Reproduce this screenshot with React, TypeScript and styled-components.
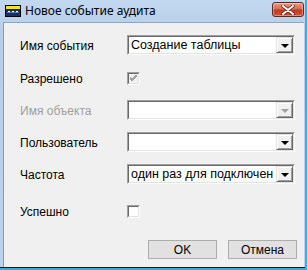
import React from "react";
import styled, { createGlobalStyle, css } from "styled-components";

const GlobalStyle = createGlobalStyle`
  html, body {
    margin: 0;
    padding: 0;
    background: #ffffff;
  }
  * {
    box-sizing: border-box;
  }
`;

const Window = styled.div`
  width: 307px;
  height: 270px;
  display: flex;
  flex-direction: column;
  background: linear-gradient(#c2d8ef, #b7cfe9 30px, #bad2ec);
  border-right: 2px solid #33b3e2;
  border-bottom: 2px solid #2fb0e0;
  box-shadow: inset 0 -1px 0 #1a1a1a;
  overflow: hidden;
`;

const TitleBar = styled.div`
  height: 22px;
  flex: none;
  display: flex;
  align-items: center;
  padding-left: 5px;
  gap: 4px;
  font-family: "Noto Sans", "Open Sans", sans-serif;
  font-size: 12px;
  color: #000;
`;

const TitleText = styled.span`
  flex: 1;
  white-space: nowrap;
  line-height: 14px;
  margin-top: -1px;
`;

const CloseButton = styled.div`
  width: 32px;
  height: 15px;
  margin-right: 1px;
  margin-top: -3px;
  border: 1px solid #6b2418;
  border-radius: 3px;
  background: linear-gradient(#e9a08e, #d46a52 45%, #c13a22 55%, #c8553b);
  display: flex;
  align-items: center;
  justify-content: center;
  box-shadow: inset 0 0 0 1px rgba(255, 255, 255, 0.35);
`;

const Client = styled.div`
  flex: 1;
  margin: 0 1px 1px 3px;
  background: #f0f0f0;
  border-left: 1px solid #7e9cc0;
  border-top: 1px solid #8aa6c6;
  padding: 12px 7px 0 16px;
  font-family: "Liberation Sans", Arial, sans-serif;
  font-size: 12px;
  color: #000;
  display: flex;
  flex-direction: column;
`;

const Row = styled.div<{ $top: number; $h: number }>`
  display: grid;
  grid-template-columns: 107px 168px;
  align-items: center;
  margin-top: ${(p) => p.$top}px;
  height: ${(p) => p.$h}px;
`;

const Label = styled.span<{ $disabled?: boolean }>`
  color: ${(p) => (p.$disabled ? "#a0a0a0" : "#000")};
  white-space: nowrap;
  padding-top: 2px;
`;

const sunken = css`
  border-style: solid;
  border-width: 1px;
  border-color: #a0a0a0 #ffffff #ffffff #a0a0a0;
`;

const Combo = styled.div`
  ${sunken};
  height: 20px;
  width: 168px;
`;

const ComboInner = styled.div`
  height: 100%;
  border-style: solid;
  border-width: 1px;
  border-color: #696969 #e3e3e3 #e3e3e3 #696969;
  background: #fff;
  display: flex;
  align-items: stretch;
`;

const ComboText = styled.span`
  flex: 1;
  overflow: hidden;
  white-space: nowrap;
  font-size: 12.5px;
  line-height: 16px;
  padding-left: 2px;
`;

const DropButton = styled.div<{ $disabled?: boolean }>`
  width: 17px;
  flex: none;
  background: #f0f0f0;
  border-style: solid;
  border-width: 1px;
  border-color: #e3e3e3 #696969 #696969 #e3e3e3;
  box-shadow: inset 1px 1px 0 #fff, inset -1px -1px 0 #a0a0a0;
  display: flex;
  align-items: center;
  justify-content: center;
  &::after {
    content: "";
    border-left: 4px solid transparent;
    border-right: 4px solid transparent;
    border-top: 4px solid ${(p) => (p.$disabled ? "#a0a0a0" : "#000")};
    margin-top: 1px;
  }
`;

const CheckBox = styled.div<{ $disabled?: boolean }>`
  ${sunken};
  width: 13px;
  height: 13px;
  div {
    width: 100%;
    height: 100%;
    border-style: solid;
    border-width: 1px;
    border-color: #696969 #e3e3e3 #e3e3e3 #696969;
    background: ${(p) => (p.$disabled ? "#f0f0f0" : "#fff")};
    display: flex;
    align-items: center;
    justify-content: center;
  }
`;

const Buttons = styled.div`
  display: flex;
  justify-content: flex-end;
  gap: 11px;
  margin-top: 24px;
`;

const Button = styled.div`
  width: 69px;
  height: 19px;
  border: 1px solid #adadad;
  background: #e1e1e1;
  display: flex;
  align-items: center;
  justify-content: center;
`;

const Combobox = ({ value, disabled }: { value?: string; disabled?: boolean }) => (
  <Combo>
    <ComboInner>
      <ComboText>{value}</ComboText>
      <DropButton $disabled={disabled} />
    </ComboInner>
  </Combo>
);

const Check = ({ checked, disabled }: { checked?: boolean; disabled?: boolean }) => (
  <CheckBox $disabled={disabled}>
    <div>
      {checked && (
        <svg width="7" height="7" viewBox="0 0 7 7">
          <path d="M0 2 L2 4 L7 -1 M0 3 L2 5 L7 0 M0 4 L2 6 L7 1" stroke="#a0a0a0" strokeWidth="1" fill="none" />
        </svg>
      )}
    </div>
  </CheckBox>
);

const AppIcon = () => (
  <svg width="16" height="12" viewBox="0 0 16 12">
    <rect x="0.5" y="0.5" width="15" height="11" fill="#1c2f5a" stroke="#000" />
    <rect x="1" y="1" width="14" height="3" fill="#f6e600" />
    <rect x="3" y="6" width="2" height="1" fill="#fff" />
    <rect x="7" y="6" width="2" height="1" fill="#fff" />
    <rect x="11" y="6" width="2" height="1" fill="#fff" />
    <rect x="2" y="7" width="12" height="1" fill="#5a7cc0" />
  </svg>
);

export default function App() {
  return (
    <>
      <GlobalStyle />
      <Window>
        <TitleBar>
          <AppIcon />
          <TitleText>Новое событие аудита</TitleText>
          <CloseButton>
            <svg width="14" height="10" viewBox="0 0 14 10">
              <path d="M2 1 L12 9 M12 1 L2 9" stroke="#5a1a10" strokeWidth="3.4" strokeLinecap="round" />
              <path d="M2 1 L12 9 M12 1 L2 9" stroke="#fff" strokeWidth="2" strokeLinecap="round" />
            </svg>
          </CloseButton>
        </TitleBar>
        <Client>
          <Row $top={0} $h={20}>
            <Label>Имя события</Label>
            <Combobox value="Создание таблицы" />
          </Row>
          <Row $top={15} $h={13}>
            <Label>Разрешено</Label>
            <Check checked disabled />
          </Row>
          <Row $top={17} $h={20}>
            <Label $disabled>Имя объекта</Label>
            <Combobox disabled />
          </Row>
          <Row $top={12} $h={20}>
            <Label>Пользователь</Label>
            <Combobox />
          </Row>
          <Row $top={12} $h={20}>
            <Label>Частота</Label>
            <Combobox value="один раз для подключен" />
          </Row>
          <Row $top={19} $h={13}>
            <Label>Успешно</Label>
            <Check />
          </Row>
          <Buttons>
            <Button>OK</Button>
            <Button>Отмена</Button>
          </Buttons>
        </Client>
      </Window>
    </>
  );
}
